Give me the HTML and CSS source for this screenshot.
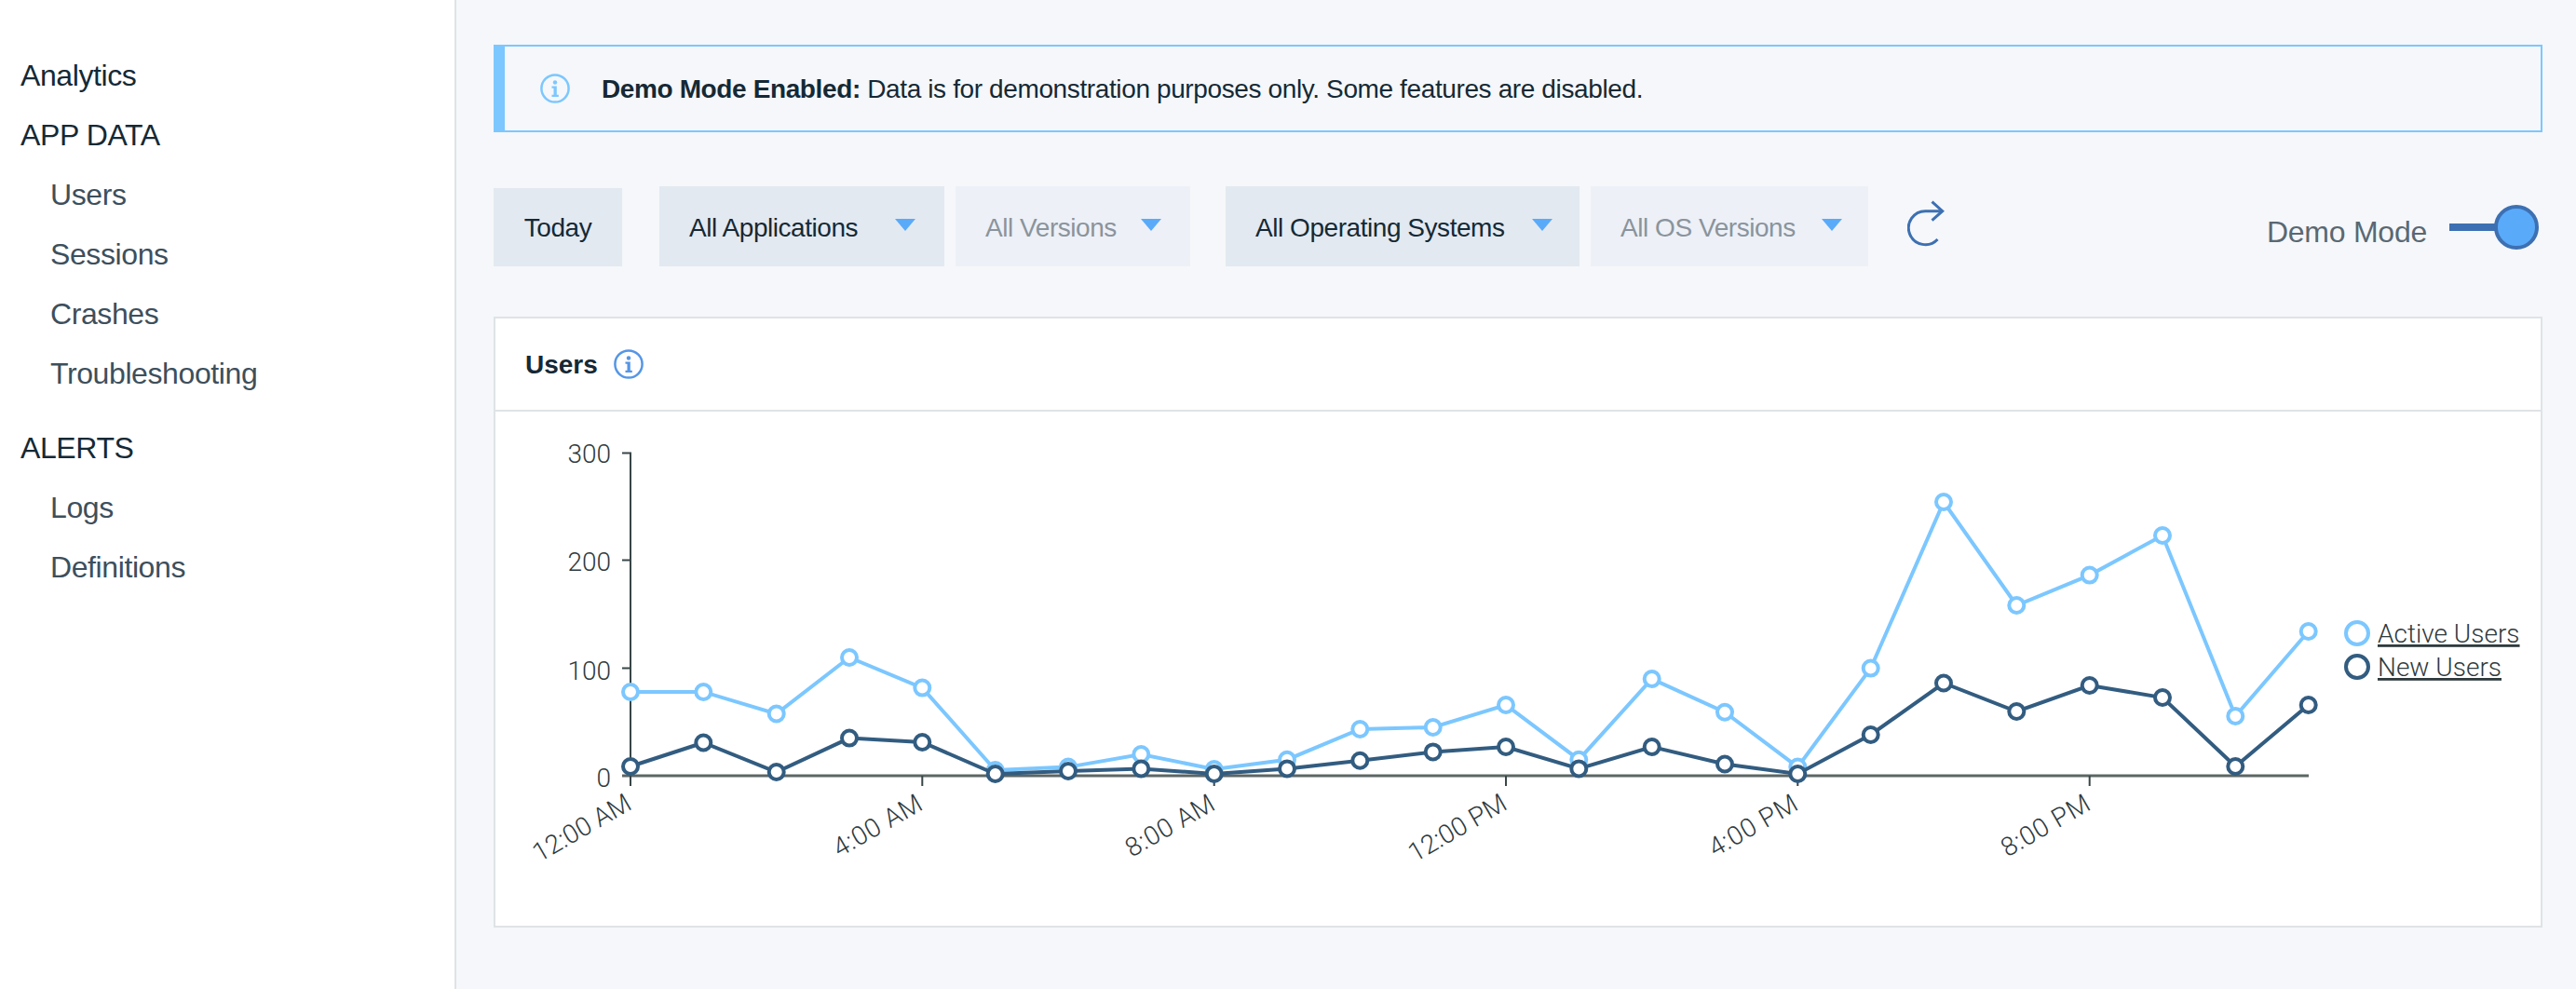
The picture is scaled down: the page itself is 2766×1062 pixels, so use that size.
FILE: index.html
```html
<!DOCTYPE html>
<html>
<head>
<meta http-equiv="Content-Type" content="text/html; charset=utf-8"/>
<title>Analytics - Users</title>
<link rel="stylesheet" href="styles.css">
</head>
<body>
<div class="page">

<nav class="sidebar">
  <a class="nav-head">Analytics</a>
  <a class="nav-head">APP DATA</a>
  <a class="nav-item">Users</a>
  <a class="nav-item">Sessions</a>
  <a class="nav-item">Crashes</a>
  <a class="nav-item">Troubleshooting</a>
  <a class="nav-head nav-group">ALERTS</a>
  <a class="nav-item">Logs</a>
  <a class="nav-item">Definitions</a>
</nav>

<main class="main">
  <div class="alert">
    <svg class="info-icon info-light" viewBox="0 0 32 32">
      <circle cx="16" cy="16" r="14.600"/>
      <circle class="info-dot" cx="16" cy="9.500" r="2.200"/>
      <path class="info-dot" d="M12.500 13.500h5.300v9.200h2v2.200h-7.300v-2.200h2v-7h-2z"/>
    </svg>
    <p class="alert-text"><b>Demo Mode Enabled:</b> Data is for demonstration purposes only. Some features are disabled.</p>
  </div>

  <div class="toolbar">
    <button class="btn btn-today">Today</button>
    <button class="btn btn-apps">All Applications<i class="caret"></i></button>
    <button class="btn btn-off btn-versions">All Versions<i class="caret"></i></button>
    <button class="btn btn-os">All Operating Systems<i class="caret"></i></button>
    <button class="btn btn-off btn-osv">All OS Versions<i class="caret"></i></button>
    <svg class="refresh" viewBox="0 0 40 50">
      <path d="M26.500 1.700L37.700 11.700L26.500 21.700"/>
      <path d="M37.500 11.700H20A18 18 0 1 0 32.500 42"/>
    </svg>
    <div class="demo">
      <span class="demo-label">Demo Mode</span>
      <span class="toggle-track"></span>
      <span class="toggle-handle"></span>
    </div>
  </div>

  <section class="card">
    <header class="card-head">
      <h2 class="card-title">Users</h2>
      <svg class="info-icon info-blue" viewBox="0 0 32 32">
        <circle cx="16" cy="16" r="14.600"/>
        <circle class="info-dot" cx="16" cy="9.500" r="2.200"/>
        <path class="info-dot" d="M12.500 13.500h5.300v9.200h2v2.200h-7.300v-2.200h2v-7h-2z"/>
      </svg>
    </header>

    <svg class="chart" viewBox="532 442 2196 552">
      <!-- axes -->
      <path class="axis" d="M668 486.500H677V833"/>
      <path class="axis" d="M668 601.500H677M668 717.500H677"/>
      <path class="axis axis-x" d="M668 833H2479"/>
      <path class="axis" d="M677 833V844M990.300 833V844M1303.700 833V844M1617 833V844M1930.300 833V844M2243.700 833V844"/>

      <text class="label" x="656" y="497" text-anchor="end">300</text>
      <text class="label" x="656" y="613" text-anchor="end">200</text>
      <text class="label" x="656" y="729.500" text-anchor="end">100</text>
      <text class="label" x="656" y="845" text-anchor="end">0</text>

      <text class="label" text-anchor="end" transform="translate(680 868) rotate(-30)">12:00 AM</text>
      <text class="label label-wide" text-anchor="end" transform="translate(993 868) rotate(-30)">4:00 AM</text>
      <text class="label label-wide" text-anchor="end" transform="translate(1307 868) rotate(-30)">8:00 AM</text>
      <text class="label" text-anchor="end" transform="translate(1620 868) rotate(-30)">12:00 PM</text>
      <text class="label label-wide" text-anchor="end" transform="translate(1933 868) rotate(-30)">4:00 PM</text>
      <text class="label label-wide" text-anchor="end" transform="translate(2247 868) rotate(-30)">8:00 PM</text>

      <!-- active users -->
      <g class="series series-active">
        <polyline points="677,743 755.300,743 833.700,766.500 912,706 990.300,738.600 1068.700,827 1147,823.600 1225.300,810 1303.700,826 1382,815.700 1460.300,783 1538.700,781 1617,757 1695.300,815.700 1773.700,729 1852,764.700 1930.300,823.600 2008.700,717.600 2087,539 2165.300,650 2243.700,617.600 2322,575 2400.300,769 2478.700,678"/>
        <circle cx="677" cy="743" r="8"/><circle cx="755.300" cy="743" r="8"/><circle cx="833.700" cy="766.500" r="8"/><circle cx="912" cy="706" r="8"/>
        <circle cx="990.300" cy="738.600" r="8"/><circle cx="1068.700" cy="827" r="8"/><circle cx="1147" cy="823.600" r="8"/><circle cx="1225.300" cy="810" r="8"/>
        <circle cx="1303.700" cy="826" r="8"/><circle cx="1382" cy="815.700" r="8"/><circle cx="1460.300" cy="783" r="8"/><circle cx="1538.700" cy="781" r="8"/>
        <circle cx="1617" cy="757" r="8"/><circle cx="1695.300" cy="815.700" r="8"/><circle cx="1773.700" cy="729" r="8"/><circle cx="1852" cy="764.700" r="8"/>
        <circle cx="1930.300" cy="823.600" r="8"/><circle cx="2008.700" cy="717.600" r="8"/><circle cx="2087" cy="539" r="8"/><circle cx="2165.300" cy="650" r="8"/>
        <circle cx="2243.700" cy="617.600" r="8"/><circle cx="2322" cy="575" r="8"/><circle cx="2400.300" cy="769" r="8"/><circle cx="2478.700" cy="678" r="8"/>
      </g>

      <!-- new users -->
      <g class="series series-new">
        <polyline points="677,823 755.300,797.500 833.700,829 912,792.600 990.300,797 1068.700,831 1147,828 1225.300,825.400 1303.700,831 1382,825.400 1460.300,816.700 1538.700,807.400 1617,802 1695.300,825.400 1773.700,802 1852,820.500 1930.300,831 2008.700,789 2087,733.500 2165.300,764 2243.700,736 2322,749 2400.300,823 2478.700,757"/>
        <circle cx="677" cy="823" r="8"/><circle cx="755.300" cy="797.500" r="8"/><circle cx="833.700" cy="829" r="8"/><circle cx="912" cy="792.600" r="8"/>
        <circle cx="990.300" cy="797" r="8"/><circle cx="1068.700" cy="831" r="8"/><circle cx="1147" cy="828" r="8"/><circle cx="1225.300" cy="825.400" r="8"/>
        <circle cx="1303.700" cy="831" r="8"/><circle cx="1382" cy="825.400" r="8"/><circle cx="1460.300" cy="816.700" r="8"/><circle cx="1538.700" cy="807.400" r="8"/>
        <circle cx="1617" cy="802" r="8"/><circle cx="1695.300" cy="825.400" r="8"/><circle cx="1773.700" cy="802" r="8"/><circle cx="1852" cy="820.500" r="8"/>
        <circle cx="1930.300" cy="831" r="8"/><circle cx="2008.700" cy="789" r="8"/><circle cx="2087" cy="733.500" r="8"/><circle cx="2165.300" cy="764" r="8"/>
        <circle cx="2243.700" cy="736" r="8"/><circle cx="2322" cy="749" r="8"/><circle cx="2400.300" cy="823" r="8"/><circle cx="2478.700" cy="757" r="8"/>
      </g>

      <!-- legend -->
      <g class="series series-active"><circle cx="2531" cy="680" r="12"/></g>
      <g class="series series-new"><circle cx="2531" cy="716" r="12"/></g>
      <text class="label legend-text" x="2553" y="690">Active Users</text>
      <text class="label legend-text" x="2553" y="726">New Users</text>
    </svg>
  </section>
</main>

</div>
</body>
</html>
```

FILE: styles.css
```css
html, body {
  margin: 0;
  padding: 0;
  height: 100%;
}

body {
  font-family: "Liberation Sans", Arial, sans-serif;
  color: #152935;
  background-color: #f5f7fa;
  overflow: hidden;
}

.page {
  display: flex;
  min-height: 100%;
}

/* sidebar */
.sidebar {
  display: flex;
  flex-direction: column;
  box-sizing: border-box;
  flex: 0 0 490px;
  height: 1062px;
  padding: 49px 0 0 22px;
  background-color: #fff;
  border-right: 2px solid #dfe3e6;
  font-size: 32px;
  letter-spacing: -0.4px;
}

.nav-head, .nav-item {
  display: block;
  height: 64px;
  line-height: 64px;
}

.nav-item {
  padding-left: 32px;
  color: #3d4f5c;
}

.nav-group {
  margin-top: 16px;
}

/* main column */
.main {
  flex: 1;
  box-sizing: border-box;
  padding: 48px 36px 0 40px;
}

.alert {
  display: flex;
  align-items: center;
  box-sizing: border-box;
  height: 94px;
  padding-left: 38px;
  border: 2px solid #7cc7ff;
  border-left-width: 12px;
}

.alert-text {
  margin: 2px 0 0 34px;
  font-size: 28px;
  letter-spacing: -0.38px;
}

.info-icon {
  flex: none;
  width: 32px;
  height: 32px;
  fill: none;
  stroke-width: 2.5;
}

.info-light {
  stroke: #7cc7ff;
  color: #7cc7ff;
}

.info-blue {
  stroke: #5596e6;
  color: #5596e6;
}

.info-dot {
  fill: currentColor;
  stroke: none;
}

/* toolbar */
.toolbar {
  display: flex;
  align-items: flex-end;
  margin-top: 58px;
  height: 86px;
}

.btn {
  display: flex;
  align-items: center;
  justify-content: space-between;
  box-sizing: border-box;
  height: 86px;
  padding: 4px 31px 0 32px;
  border: 0;
  background-color: #e3e9f1;
  font-family: inherit;
  font-size: 28px;
  letter-spacing: -0.45px;
  color: #152935;
}

.btn-off {
  background-color: #edf0f7;
  color: #8a949c;
}

.btn-today {
  width: 138px;
  height: 84px;
  padding: 2px 0 0 0;
  justify-content: center;
}

.btn-apps {
  width: 306px;
  margin-left: 40px;
}

.btn-versions {
  width: 252px;
  margin-left: 12px;
}

.btn-os {
  width: 380px;
  margin-left: 38px;
  padding-right: 29px;
}

.btn-osv {
  width: 298px;
  margin-left: 12px;
  padding-right: 28px;
}

.caret {
  flex: none;
  margin-top: -8px;
  width: 0;
  height: 0;
  border-left: 11px solid transparent;
  border-right: 11px solid transparent;
  border-top: 13px solid #5aaafa;
}

.refresh {
  flex: none;
  align-self: flex-start;
  margin: 15px 0 0 42px;
  width: 40px;
  height: 50px;
  fill: none;
  stroke: #3d70b2;
  stroke-width: 3;
}

.demo {
  display: flex;
  align-items: center;
  align-self: flex-start;
  margin: 20px 4px 0 auto;
}

.demo-label {
  margin: 11px 24px 0 0;
  font-size: 32px;
  letter-spacing: -0.25px;
  color: #5a6872;
}

.toggle-track {
  width: 50px;
  height: 8px;
  background-color: #3d70b2;
}

.toggle-handle {
  box-sizing: border-box;
  width: 48px;
  height: 48px;
  margin-left: -2px;
  border: 4px solid #3d70b2;
  border-radius: 50%;
  background-color: #5aaafa;
}

/* chart card */
.card {
  box-sizing: border-box;
  height: 656px;
  margin-top: 54px;
  background-color: #fff;
  border: 2px solid #dfe3e6;
}

.card-head {
  display: flex;
  align-items: center;
  box-sizing: border-box;
  height: 100px;
  padding-left: 32px;
  border-bottom: 2px solid #dfe3e6;
}

.card-title {
  margin: 2px 17px 0 0;
  font-size: 28px;
  font-weight: bold;
}

.chart {
  display: block;
  width: 2196px;
  height: 552px;
}

.axis {
  fill: none;
  stroke: #384648;
  stroke-width: 2;
}

.axis-x {
  stroke: #5c6664;
  stroke-width: 3;
}

.label {
  font-family: Roboto, "Liberation Sans", sans-serif;
  font-weight: 300;
  font-size: 28px;
  fill: #2f3a3d;
}

.label-wide {
  letter-spacing: 0.7px;
}

.legend-text {
  text-decoration: underline;
}

.series polyline {
  fill: none;
  stroke-width: 4;
}

.series circle {
  fill: #fff;
  stroke-width: 4;
}

.series-active polyline, .series-active circle {
  stroke: #7cc7ff;
}

.series-new polyline, .series-new circle {
  stroke: #325c80;
}
```
